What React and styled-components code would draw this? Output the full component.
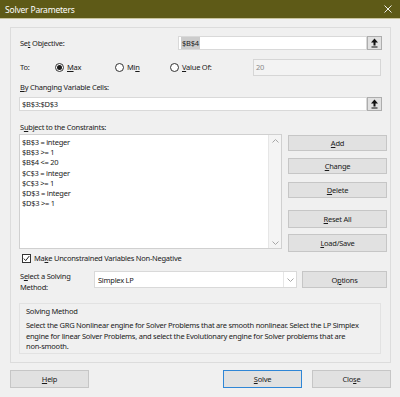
import React from 'react';
import styled, { createGlobalStyle } from 'styled-components';

const GlobalStyle = createGlobalStyle`
  body {
    margin: 0;
    background: #f0f0f0;
    font-family: "Noto Sans", "Open Sans", sans-serif;
  }
`;

const Window = styled.div`
  width: 400px;
  height: 397px;
  background: #f0f0f0;
  color: #1a1a1a;
  font-size: 7.5px;
  letter-spacing: -0.25px;
  display: flex;
  flex-direction: column;
  overflow: hidden;
`;

const TitleBar = styled.div`
  height: 18px;
  background: #5e5a17;
  border-bottom: 1px solid #c9c49c;
  color: #fff;
  display: flex;
  align-items: center;
  justify-content: space-between;
  padding: 0 8px 0 5px;
  font-size: 8.5px;
  letter-spacing: -0.2px;
`;

const Body = styled.div`
  padding: 8px 9px 0 10px;
  display: flex;
  flex-direction: column;
`;

const Group = styled.div`
  width: 381px;
  box-sizing: border-box;
  border: 1px solid #dcdcdc;
  padding: 0 0 8px 8px;
  display: flex;
  flex-direction: column;
`;

const Row = styled.div`
  display: flex;
  align-items: ${p => p.$align || 'center'};
  height: ${p => p.$h}px;
  margin-top: ${p => p.$mt || 0}px;
  padding-left: ${p => p.$pl || 0}px;
`;

const Label = styled.div`
  width: ${p => (p.$w ? `${p.$w}px` : 'auto')};
  flex-shrink: 0;
  padding-left: 1px;
  box-sizing: border-box;
  line-height: ${p => p.$lh || 10}px;
`;

const Key = styled.u`
  text-underline-offset: 1px;
`;

const TextField = styled.div`
  width: ${p => p.$w}px;
  height: ${p => p.$h}px;
  box-sizing: border-box;
  background: ${p => (p.$disabled ? '#f3f3f3' : '#fff')};
  border: 1px solid ${p => (p.$disabled ? '#d6d6d6' : '#d9d9d9')};
  color: ${p => (p.$disabled ? '#8a8a8a' : '#1a1a1a')};
  display: flex;
  align-items: center;
  padding-left: 2px;
`;

const Selected = styled.span`
  background: #cccccc;
  padding: 1px 1px;
`;

const RefButton = styled.div`
  width: 15px;
  height: 14px;
  box-sizing: border-box;
  border: 1px solid #adadad;
  background: #e1e1e1;
  display: flex;
  align-items: center;
  justify-content: center;
`;

const RadioOption = styled.div`
  width: ${p => p.$w}px;
  flex-shrink: 0;
  display: flex;
  align-items: center;
  gap: 3px;
`;

const RadioCircle = styled.span`
  width: 9px;
  height: 9px;
  box-sizing: border-box;
  border-radius: 50%;
  border: 1px solid #333;
  background: #fff;
  display: flex;
  align-items: center;
  justify-content: center;
  &::after {
    content: '';
    width: 5px;
    height: 5px;
    border-radius: 50%;
    background: ${p => (p.$checked ? '#1a1a1a' : 'transparent')};
  }
`;

const ListBox = styled.div`
  width: 263px;
  height: 115px;
  box-sizing: border-box;
  border: 1px solid #d0d0d0;
  background: #fff;
  display: flex;
  flex-shrink: 0;
`;

const ListItems = styled.div`
  flex: 1;
  padding: 2px 0 0 2px;
  line-height: 10.2px;
`;

const ScrollBar = styled.div`
  width: 12px;
  border-left: 1px solid #e6e6e6;
  background: #f4f4f4;
  display: flex;
  flex-direction: column;
  justify-content: space-between;
  align-items: center;
  padding: 4px 0 3px;
`;

const ButtonColumn = styled.div`
  margin-left: 6px;
  display: flex;
  flex-direction: column;
`;

const Button = styled.div`
  width: ${p => p.$w}px;
  height: ${p => p.$h}px;
  margin-top: ${p => p.$mt || 0}px;
  margin-left: ${p => p.$ml || 0}px;
  box-sizing: border-box;
  flex-shrink: 0;
  background: #e1e1e1;
  border: 1px solid ${p => (p.$primary ? '#2f86d6' : '#c6c6c6')};
  display: flex;
  align-items: center;
  justify-content: center;
  color: #1a1a1a;
`;

const CheckBox = styled.span`
  width: 9px;
  height: 9px;
  box-sizing: border-box;
  border: 1px solid #333;
  background: #fff;
  display: flex;
  align-items: center;
  justify-content: center;
  margin-right: 3px;
`;

const SelectBox = styled.div`
  width: 203px;
  height: 17px;
  box-sizing: border-box;
  border: 1px solid #d9d9d9;
  background: #fff;
  display: flex;
  flex-shrink: 0;
`;

const SelectValue = styled.div`
  flex: 1;
  display: flex;
  align-items: center;
  padding-left: 3px;
`;

const SelectArrow = styled.div`
  width: 12px;
  border-left: 1px solid #e6e6e6;
  display: flex;
  align-items: center;
  justify-content: center;
`;

const InfoBox = styled.div`
  width: 362px;
  height: 51px;
  margin-top: 15px;
  box-sizing: border-box;
  border: 1px solid #e2e2e2;
  padding: 2px 0 0 6px;
`;

const InfoTitle = styled.div`
  line-height: 10px;
`;

const InfoText = styled.div`
  margin-top: 4px;
  line-height: 10.5px;
  white-space: nowrap;
`;

const Footer = styled.div`
  margin-top: 7px;
  padding: 0 9px 0 10px;
  display: flex;
  justify-content: space-between;
`;

const FooterRight = styled.div`
  display: flex;
  gap: 10px;
`;

const UpArrow = () => (
  <svg width="9" height="10" viewBox="0 0 9 10">
    <path d="M4.5 0.5 L8 4.5 L5.5 4.5 L5.5 7.5 L3.5 7.5 L3.5 4.5 L1 4.5 Z" fill="#111" />
    <rect x="1.5" y="8.5" width="6" height="1" fill="#111" />
  </svg>
);

const CloseIcon = () => (
  <svg width="8" height="8" viewBox="0 0 8 8">
    <path d="M0.5 0.5 L7.5 7.5 M7.5 0.5 L0.5 7.5" stroke="#fff" strokeWidth="0.9" />
  </svg>
);

const Chevron = ({ up }) => (
  <svg width="7" height="4" viewBox="0 0 7 4">
    <path d={up ? 'M0.5 3.5 L3.5 0.5 L6.5 3.5' : 'M0.5 0.5 L3.5 3.5 L6.5 0.5'} fill="none" stroke="#a6a6a6" strokeWidth="1" />
  </svg>
);

const Tick = () => (
  <svg width="7" height="7" viewBox="0 0 7 7">
    <path d="M0.8 3.6 L2.7 5.6 L6.3 1" fill="none" stroke="#222" strokeWidth="1" />
  </svg>
);

const constraints = [
  '$B$3 = integer',
  '$B$3 >= 1',
  '$B$4 <= 20',
  '$C$3 = integer',
  '$C$3 >= 1',
  '$D$3 = integer',
  '$D$3 >= 1',
];

export default function App() {
  return (
    <Window>
      <GlobalStyle />
      <TitleBar>
        <span>Solver Parameters</span>
        <CloseIcon />
      </TitleBar>
      <Body>
        <Group>
          <Row $h={14} $mt={8}>
            <Label $w={159}>Se<Key>t</Key> Objective:</Label>
            <TextField $w={189} $h={14}>
              <Selected>$B$4</Selected>
            </TextField>
            <RefButton><UpArrow /></RefButton>
          </Row>

          <Row $h={18} $mt={8}>
            <Label $w={36}>To:</Label>
            <RadioOption $w={60}>
              <RadioCircle $checked />
              <span><Key>M</Key>ax</span>
            </RadioOption>
            <RadioOption $w={55}>
              <RadioCircle />
              <span>Mi<Key>n</Key></span>
            </RadioOption>
            <RadioOption $w={83}>
              <RadioCircle />
              <span><Key>V</Key>alue Of:</span>
            </RadioOption>
            <TextField $w={128} $h={17} $disabled>20</TextField>
          </Row>

          <Row $h={10} $mt={6}>
            <Label><Key>B</Key>y Changing Variable Cells:</Label>
          </Row>
          <Row $h={14} $mt={5}>
            <TextField $w={348} $h={14}>$B$3:$D$3</TextField>
            <RefButton><UpArrow /></RefButton>
          </Row>

          <Row $h={10} $mt={11}>
            <Label>S<Key>u</Key>bject to the Constraints:</Label>
          </Row>
          <Row $h={118} $mt={2} $align="flex-start">
            <ListBox>
              <ListItems>
                {constraints.map(c => (
                  <div key={c}>{c}</div>
                ))}
              </ListItems>
              <ScrollBar>
                <Chevron up />
                <Chevron />
              </ScrollBar>
            </ListBox>
            <ButtonColumn>
              <Button $w={99} $h={16} $mt={1}><span><Key>A</Key>dd</span></Button>
              <Button $w={99} $h={16} $mt={7}><span><Key>C</Key>hange</span></Button>
              <Button $w={99} $h={16} $mt={8}><span><Key>D</Key>elete</span></Button>
              <Button $w={99} $h={18} $mt={12}><span><Key>R</Key>eset All</span></Button>
              <Button $w={99} $h={18} $mt={6}><span><Key>L</Key>oad/Save</span></Button>
            </ButtonColumn>
          </Row>

          <Row $h={10} $mt={1} $pl={3}>
            <CheckBox><Tick /></CheckBox>
            <span>Ma<Key>k</Key>e Unconstrained Variables Non-Negative</span>
          </Row>

          <Row $h={17} $mt={8} $align="flex-start">
            <Label $w={75} $lh={11}>
              S<Key>e</Key>lect a Solving<br />Method:
            </Label>
            <SelectBox>
              <SelectValue>Simplex LP</SelectValue>
              <SelectArrow><Chevron /></SelectArrow>
            </SelectBox>
            <Button $w={85} $h={17} $ml={5}><span>O<Key>p</Key>tions</span></Button>
          </Row>

          <InfoBox>
            <InfoTitle>Solving Method</InfoTitle>
            <InfoText>
              Select the GRG Nonlinear engine for Solver Problems that are smooth nonlinear. Select the LP Simplex
              <br />
              engine for linear Solver Problems, and select the Evolutionary engine for Solver problems that are
              <br />
              non-smooth.
            </InfoText>
          </InfoBox>
        </Group>
      </Body>
      <Footer>
        <Button $w={79} $h={18}><span><Key>H</Key>elp</span></Button>
        <FooterRight>
          <Button $w={79} $h={18} $primary><span><Key>S</Key>olve</span></Button>
          <Button $w={79} $h={18}><span>Clo<Key>s</Key>e</span></Button>
        </FooterRight>
      </Footer>
    </Window>
  );
}
